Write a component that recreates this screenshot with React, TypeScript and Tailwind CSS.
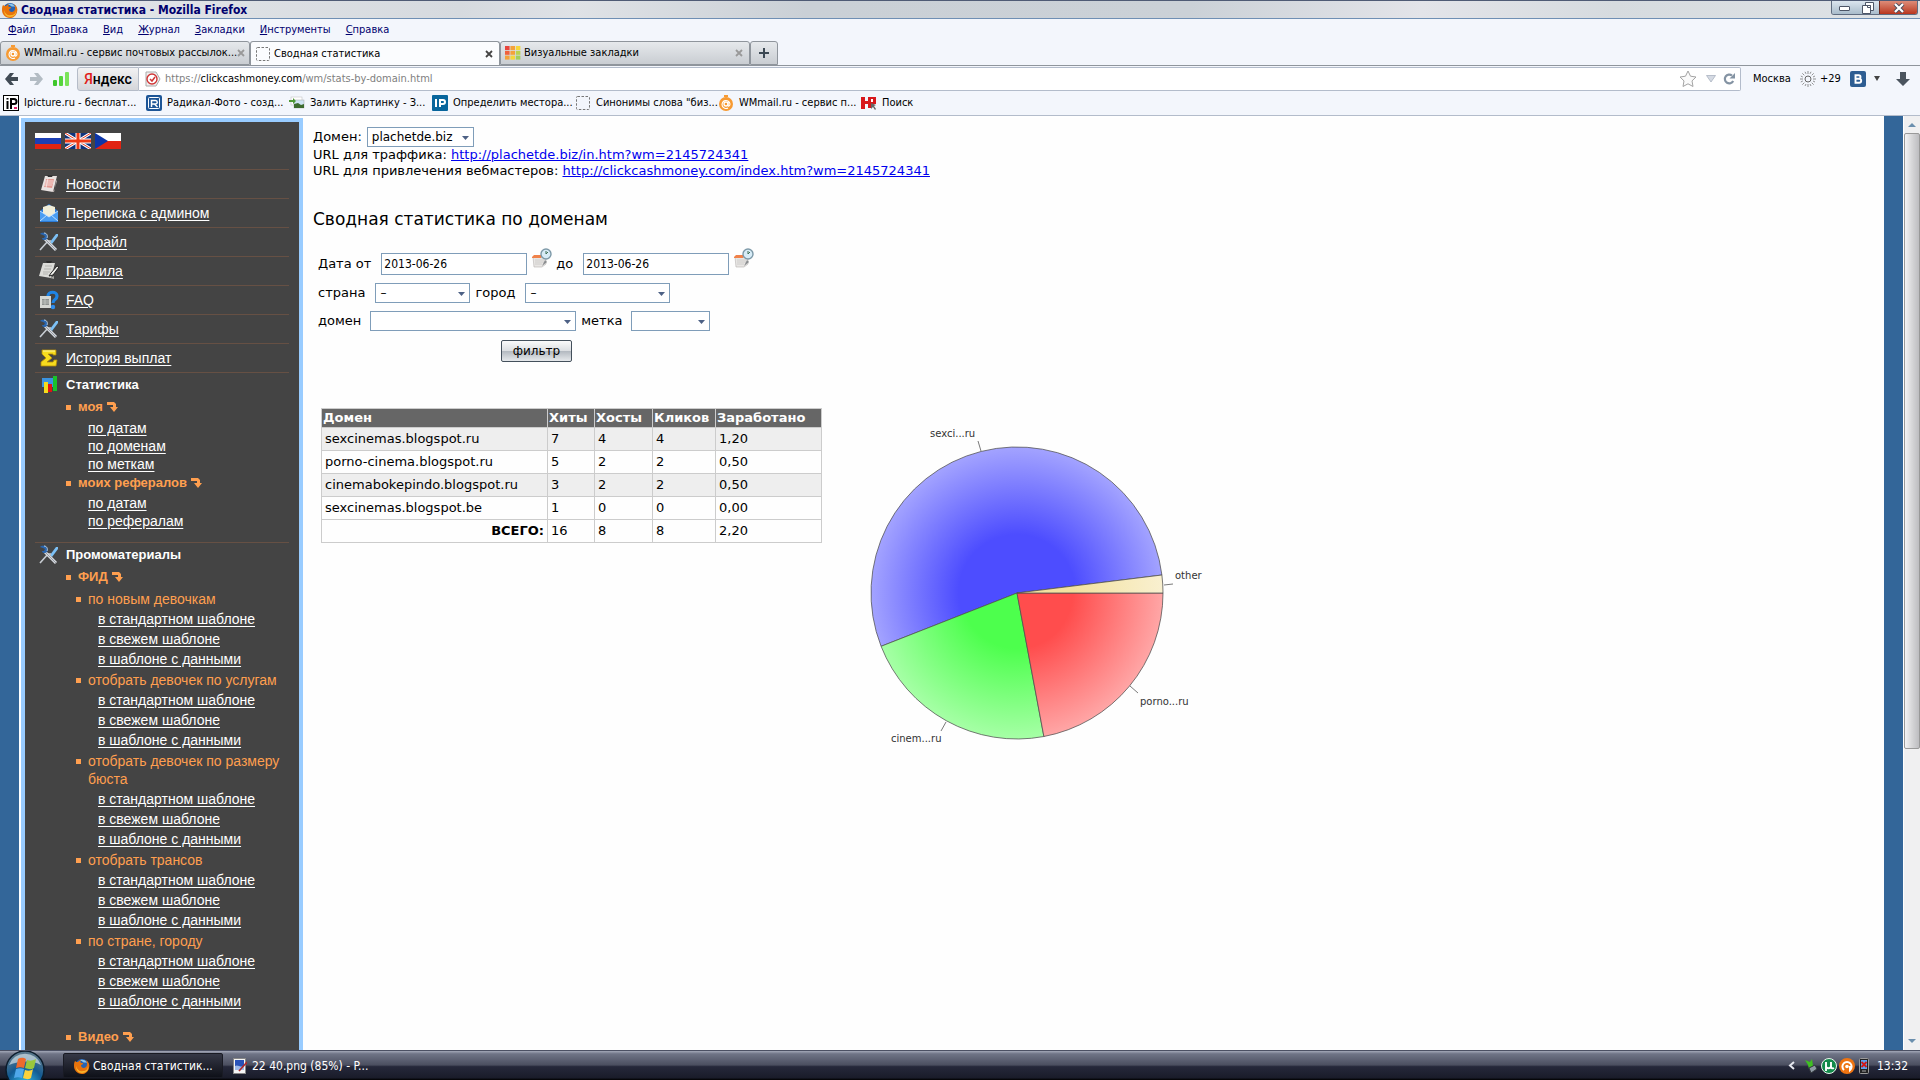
import type { ReactNode } from 'react';

const menuItems = ['Файл', 'Правка', 'Вид', 'Журнал', 'Закладки', 'Инструменты', 'Справка'];

const mainLinks: { label: string; icon: () => ReactNode }[] = [
  { label: 'Новости', icon: NewsIcon },
  { label: 'Переписка с админом', icon: MailIcon },
  { label: 'Профайл', icon: ToolsIcon },
  { label: 'Правила', icon: RulesIcon },
  { label: 'FAQ', icon: FaqIcon },
  { label: 'Тарифы', icon: ToolsIcon },
  { label: 'История выплат', icon: SumIcon },
];

const feedGroups = [
  'по новым девочкам',
  'отобрать девочек по услугам',
  'отобрать девочек по размеру бюста',
  'отобрать трансов',
  'по стране, городу',
];
const feedTemplates = ['в стандартном шаблоне', 'в свежем шаблоне', 'в шаблоне с данными'];

const columns = [
  { title: 'Домен', width: 'w-[226px]' },
  { title: 'Хиты', width: 'w-[47px]' },
  { title: 'Хосты', width: 'w-[58px]' },
  { title: 'Кликов', width: 'w-[63px]' },
  { title: 'Заработано', width: 'w-[106px]' },
];
const rows = [
  ['sexcinemas.blogspot.ru', '7', '4', '4', '1,20'],
  ['porno-cinema.blogspot.ru', '5', '2', '2', '0,50'],
  ['cinemabokepindo.blogspot.ru', '3', '2', '2', '0,50'],
  ['sexcinemas.blogspot.be', '1', '0', '0', '0,00'],
];

/* ---------- icons ---------- */

function FirefoxIcon() {
  return (
    <svg viewBox="0 0 16 16" className="size-4 shrink-0">
      <circle cx="8" cy="8" r="7" fill="#2a63b0" />
      <path d="M6 2c3-1 6 0 7 3-2-1-3 0-4-1S7 4 6 2z" fill="#8cc7ee" />
      <path d="M1 3c1 1 2 1 3 1 1-1 2-2 3-2-1 1-1 2 0 3h2c0 1-1 2-2 2 0 3 3 4 5 2 2-2 1-5 0-7 3 2 4 5 3 8-1 4-4 6-7 6-5 0-8-4-8-8 0-2 0-3 1-5z" fill="#e8730c" />
      <path d="M2 8c1 4 4 6 7 5 3 0 5-2 5-5 1 4-2 7-6 7s-6-3-6-7z" fill="#f8b52c" />
    </svg>
  );
}

function WmMailIcon() {
  return (
    <svg viewBox="0 0 16 16" className="size-4 shrink-0">
      <circle cx="8" cy="9" r="7" fill="#f79a32" />
      <path d="M6 0h4v2H6z" fill="#f79a32" />
      <circle cx="8" cy="9" r="2" fill="none" stroke="#fff" strokeWidth="1.3" />
      <path d="M10 7v3c0 2 2 1 2-1a4 4 0 1 0-2 4" fill="none" stroke="#fff" strokeWidth="1.1" />
    </svg>
  );
}

function BlankIcon() {
  return (
    <svg viewBox="0 0 16 16" className="size-4 shrink-0">
      <rect x="1.5" y="1.5" width="13" height="13" rx="1" fill="none" stroke="#777" strokeDasharray="2.5 1.5" />
    </svg>
  );
}

function GridIcon() {
  const fills = ['#e8453c', '#f4a13a', '#f6d63a', '#f0603c', '#f4a13a', '#b9d34c', '#f4a13a', '#f6d63a', '#a4cf5a'];
  return (
    <svg viewBox="0 0 16 16" className="size-4 shrink-0">
      {fills.map((fill, i) => (
        <rect key={i} x={(i % 3) * 5.4} y={1 + Math.floor(i / 3) * 4.8} width="4.6" height="4" fill={fill} />
      ))}
    </svg>
  );
}

function IpictureIcon() {
  return (
    <svg viewBox="0 0 16 16" className="size-4 shrink-0">
      <rect x=".5" y=".5" width="15" height="15" fill="#fff" stroke="#000" />
      <path d="M4.500 3v1.500M4.500 6v8M8 14V4h3a2 2 0 0 1 0 5H8" fill="none" stroke="#000" strokeWidth="2" />
      <path d="M11 13h3" stroke="#e0246c" strokeWidth="2" />
    </svg>
  );
}

function RadikalIcon() {
  return (
    <svg viewBox="0 0 16 16" className="size-4 shrink-0">
      <rect width="16" height="16" rx="2" fill="#1d5596" />
      <rect x="2.500" y="2.500" width="11" height="11" rx="1" fill="none" stroke="#fff" />
      <path d="M5.500 12V5.500h4a1.500 1.500 0 0 1 0 3.500h-4m3 0 3 3" fill="none" stroke="#fff" strokeWidth="1.500" />
    </svg>
  );
}

function PhotoIcon() {
  return (
    <svg viewBox="0 0 16 16" className="size-4 shrink-0">
      <rect x="2" y="2" width="11" height="8" fill="#fff" stroke="#bbb" strokeWidth=".5" />
      <rect x="5" y="5" width="10" height="8" fill="#cfe4f3" stroke="#aaa" strokeWidth=".5" />
      <path d="M5 13V9l4-1 3 2 3-1v4z" fill="#3d6b2e" />
      <path d="M0 5h4V3l3 3-3 3V7H0z" fill="#4f9a36" />
    </svg>
  );
}

function IpIcon() {
  return (
    <svg viewBox="0 0 16 16" className="size-4 shrink-0">
      <rect width="16" height="16" rx="1" fill="#07659c" />
      <path d="M4 4v8M8 12V5h3a1.500 1.500 0 0 1 0 4H8" fill="none" stroke="#fff" strokeWidth="2" />
    </svg>
  );
}

function SearchSiteIcon() {
  return (
    <svg viewBox="0 0 16 16" className="size-4 shrink-0">
      <path d="M0 2h4v4h3V2h8v7h-4v4H7V9H4v5H0z" fill="#d8181c" />
      <path d="M10 4h2v3h-2z" fill="#fff" />
      <path d="m10 8 5 2-2 1 2 3-1 1-2-3-2 2z" fill="#666" />
    </svg>
  );
}

function NewsIcon() {
  return (
    <svg viewBox="0 0 20 20" className="size-5">
      <path d="M6 2 18 2 14 18 2 16z" fill="#e9e2e0" />
      <path d="M7 5l8 0-2 9-8-1z" fill="#e49a93" />
      <path d="M6 7h8M6 9h8M5 11h8M9 4 7 14" stroke="#f6e9e6" strokeWidth=".8" />
      <path d="M8 1h6l-1 2H9z" fill="#333" />
      <path d="m13 18 3-3 1-9 1 1-3 11z" fill="#b3aaa8" />
    </svg>
  );
}

function MailIcon() {
  return (
    <svg viewBox="0 0 20 20" className="size-5">
      <path d="M1 8 10 1l9 7v11H1z" fill="#2c7bd8" />
      <path d="M4 4 10 2l6 2v7l-6 4-6-4z" fill="#f1eed8" />
      <path d="m1 8 9 6 9-6v10H1z" fill="#4a9df2" />
      <path d="m1 18 7-6m11 6-7-6M1 8l9 6 9-6" fill="none" stroke="#c9e4ff" strokeWidth=".9" />
    </svg>
  );
}

function ToolsIcon() {
  return (
    <svg viewBox="0 0 20 20" className="size-5">
      <path d="m11 10 6-8 2 0 0 2-6 8z" fill="#7cc0f5" />
      <path d="m12 9-3 0-8 9" stroke="#c7ccd2" strokeWidth="1.600" fill="none" />
      <path d="m6 7 11 11" stroke="#d5d9de" strokeWidth="3" />
      <path d="m6 7 11 11" stroke="#858c95" strokeWidth=".8" />
      <path d="M1 2c1-1 4-2 6 0 1 1 2 4 1 5-2 2-5 1-5-1l2 0 1-2-2-1z" fill="#2a66b0" />
      <path d="M5 1c3 0 4 3 3 5" stroke="#b8d4ee" fill="none" />
    </svg>
  );
}

function RulesIcon() {
  return (
    <svg viewBox="0 0 20 20" className="size-5">
      <path d="M4 2h12l-4 15L0 15z" fill="#dcdcd8" />
      <path d="M6 5h7M5 8h7M4 11h7M4 13h5" stroke="#b4b4b0" strokeWidth="1.200" />
      <path d="M7 0h6l-1 2H8z" fill="#2d2d2d" />
      <path d="m18 5-6 7-2 3 4-1 6-8z" fill="#f1f1ee" stroke="#222" />
      <path d="m11 17 4 1 0-3z" fill="#a9a9a4" />
    </svg>
  );
}

function FaqIcon() {
  return (
    <svg viewBox="0 0 20 20" className="size-5">
      <path d="M1 6h11v12H1z" fill="#d5d7d3" />
      <path d="M3 9h7v6H3z" fill="#8e9290" />
      <path d="M3 11h7M3 13h7M6 9v6" stroke="#cfd1ce" strokeWidth=".7" />
      <path d="M9 6c0-5 9-5 9 0 0 4-4 3-4 7" fill="none" stroke="#1f85e6" strokeWidth="3.200" />
      <circle cx="14" cy="17" r="2.200" fill="#2f8ff0" />
    </svg>
  );
}

function SumIcon() {
  return (
    <svg viewBox="0 0 20 20" className="size-5">
      <path d="M3 2h14v5h-3V6H9l4 4-5 4h6l1-2h3l-1 6H2v-4l5-4-4-4z" fill="#f7dc1e" stroke="#b58d08" strokeWidth=".8" />
      <path d="M4 3h12" stroke="#fff6a0" />
    </svg>
  );
}

function ChartIcon() {
  return (
    <svg viewBox="0 0 20 20" className="size-5">
      <path d="M3 3h12v9H3z" fill="#3b93e0" />
      <rect x="14" y="1" width="4" height="15" fill="#18c32a" />
      <rect x="9" y="9" width="4" height="8" fill="#e01414" />
      <rect x="5" y="7" width="4" height="11" fill="#f4dc1c" />
    </svg>
  );
}

function DownTurnIcon() {
  return (
    <svg viewBox="0 0 11 10" className="h-[10px] w-[11px]" fill="#ff9f4f">
      <path d="M0 0h4v3H0z" />
      <path d="M4 0h3l2 2v3h2L7 10 3 5h3V3H4z" />
    </svg>
  );
}

function CalendarIcon() {
  return (
    <svg viewBox="0 0 20 20" className="size-5">
      <path d="M1 9h13v7l-4 3H2z" fill="#e8e6e4" stroke="#b5b2b0" strokeWidth=".6" />
      <path d="m0 9 2-2h9l-2 3H0z" fill="#f0824a" />
      <path d="M3 12h9M3 14h9M3 16h7" stroke="#c9c6c4" strokeWidth=".8" />
      <path d="m13 12-3 6 5-4z" fill="#8a8d90" />
      <circle cx="14" cy="6" r="5" fill="#d7ecf7" stroke="#7d99a8" strokeWidth="1.400" />
      <path d="M14 6V3m0 3 2-2" stroke="#3f6f55" />
    </svg>
  );
}

function Flags() {
  return (
    <div className="flex gap-1">
      <svg viewBox="0 0 26 16" className="h-4 w-[26px]">
        <path d="M0 0h26v6H0z" fill="#fff" />
        <path d="M0 5h26v6H0z" fill="#1c3fb4" />
        <path d="M0 11h26v5H0z" fill="#e02412" />
      </svg>
      <svg viewBox="0 0 26 16" className="h-4 w-[26px]">
        <path d="M0 0h26v16H0z" fill="#10347c" />
        <path d="m0 0 26 16M26 0 0 16" stroke="#fff" strokeWidth="3" />
        <path d="m0 0 26 16M26 0 0 16" stroke="#e8381c" />
        <path d="M13 0v16M0 8h26" stroke="#fff" strokeWidth="5" />
        <path d="M13 0v16M0 8h26" stroke="#f03a16" strokeWidth="3" />
      </svg>
      <svg viewBox="0 0 26 16" className="h-4 w-[26px]">
        <path d="M0 0h26v8H0z" fill="#fff" />
        <path d="M0 8h26v8H0z" fill="#e02412" />
        <path d="m0 0 13 8-13 8z" fill="#0c35a8" />
      </svg>
    </div>
  );
}

/* ---------- browser chrome ---------- */

function TitleBar() {
  return (
    <div className="flex h-[19px] items-start justify-between border-t border-b border-t-[#4f5b75] border-b-[#6f8fb4] bg-[linear-gradient(100deg,#e4e7ea,#d6dadf_24%,#dfe2e6_30%,#cad0d6_42%,#cbd1d7_62%,#e3e4e9_74%,#d6dbdf_84%,#dfe3e6)] pl-0.5">
      <div className="flex h-[17px] items-center gap-[3px]">
        <FirefoxIcon />
        <h1 className="text-[12px] leading-4 font-bold text-[#00006e]">Сводная статистика - Mozilla Firefox</h1>
      </div>
      <div className="mr-0.5 flex h-[14px] overflow-hidden rounded-b-[3px] border border-t-0 border-[#5f6c80]">
        <button aria-label="Свернуть" className="flex w-6 items-end justify-center bg-gradient-to-b from-[#dbe5ee] to-[#a9bccb] pb-[3px]">
          <span className="h-[5px] w-[11px] rounded-[1px] border border-[#4c5566] bg-white" />
        </button>
        <button aria-label="Развернуть" className="flex w-[23px] items-center justify-center bg-gradient-to-b from-[#dbe5ee] to-[#a9bccb]">
          <svg viewBox="0 0 12 12" className="size-3" fill="#fff" stroke="#4c5566">
            <path d="M3.500.5h8v8h-8z" />
            <path d="M.5 3.500h8v8h-8z" />
            <path d="M5.500 3.500h3v2h-3z" />
          </svg>
        </button>
        <button aria-label="Закрыть" className="flex w-[38px] items-center justify-center border-l border-[#6b2a20] bg-gradient-to-b from-[#dd8c78] to-[#b8341c]">
          <svg viewBox="0 0 12 10" className="h-[10px] w-3">
            <path d="m2 1 8 8m0-8L2 9" stroke="#4c4c5c" strokeWidth="4" />
            <path d="m2 1 8 8m0-8L2 9" stroke="#fff" strokeWidth="2.200" />
          </svg>
        </button>
      </div>
    </div>
  );
}

function Tab({ icon, title, active = false }: { icon: ReactNode; title: string; active?: boolean }) {
  return (
    <div
      className={
        active
          ? 'flex h-6 w-[250px] items-center rounded-t-[3px] border border-b-0 border-[#8f959c] bg-[#fbfcfe] pr-[6px] pl-1'
          : 'flex h-6 w-[250px] items-center rounded-t-[3px] border border-[#8f959c] bg-gradient-to-b from-[#e6e9ec] to-[#c9cdd2] pr-[6px] pl-1'
      }
    >
      {icon}
      <button role="tab" aria-selected={active} className="ml-[3px] flex-1 text-left whitespace-nowrap">
        {title}
      </button>
      <button aria-label="Закрыть вкладку" className={active ? 'text-[#444]' : 'text-[#999]'}>
        <svg viewBox="0 0 8 8" className="size-2" stroke="currentColor" strokeWidth="1.800">
          <path d="m1 1 6 6m0-6L1 7" />
        </svg>
      </button>
    </div>
  );
}

function AddressBar() {
  return (
    <div className="flex h-[25px] items-center">
      <button aria-label="Назад" className="ml-[5px]">
        <svg viewBox="0 0 14 12" className="h-3 w-[14px]" fill="#414b55">
          <path d="M5 0h4L6 4h7v4H6l3 4H5L0 6z" />
        </svg>
      </button>
      <button aria-label="Вперёд" className="ml-[10px]">
        <svg viewBox="0 0 14 12" className="h-3 w-[14px]" fill="#b3bcc4">
          <path d="M9 0H5l3 4H1v4h7l-3 4h4l5-6z" />
        </svg>
      </button>
      <svg viewBox="0 0 16 14" className="ml-[10px] h-[14px] w-4">
        <rect y="8" width="4" height="6" rx="1" fill="#3fc72c" />
        <rect x="6" y="4" width="4" height="10" rx="1" fill="#56d53c" />
        <rect x="12" width="4" height="14" rx="1" fill="#7be35a" />
      </svg>
      <button className="ml-2 h-6 w-[62px] rounded-l-[3px] border border-[#b5bcc8] bg-gradient-to-b from-[#f2f2f3] to-[#d4d6da] text-center font-['Roboto',sans-serif] text-[14px] leading-5 font-medium text-black">
        <span className="text-[#e01b1b]">Я</span>ндекс
      </button>
      <div className="flex h-6 min-w-0 flex-1 items-center rounded-r-[2px] border border-l-0 border-[#b3bccb] bg-white pr-[5px] pl-1.5">
        <svg viewBox="0 0 16 16" className="size-4">
          <path d="M1 1h10l4 7-4 7H1z" fill="#f0f0f0" stroke="#aaa" />
          <circle cx="7" cy="8" r="5" fill="#fff" stroke="#cf3434" strokeWidth="1.400" />
          <path d="M5 8l2 2 3-4" fill="none" stroke="#cf3434" strokeWidth="1.500" />
        </svg>
        <div className="ml-1 flex-1 text-[#808080]">
          https://<span className="text-black">clickcashmoney.com</span>/wm/stats-by-domain.html
        </div>
        <button aria-label="Добавить в закладки">
          <svg viewBox="0 0 18 17" className="h-[17px] w-[18px]" fill="#fafafa" stroke="#a3a3a3">
            <path d="m9 1 2.500 5.200 5.500.8-4 3.900 1 5.600-5-2.700-5 2.700 1-5.600-4-3.900 5.500-.8z" />
          </svg>
        </button>
        <svg viewBox="0 0 10 8" className="ml-[9px] h-2 w-[10px]" fill="#d5dae3" stroke="#aab3c0" strokeWidth=".8">
          <path d="M.5.5h9L5 7z" />
        </svg>
        <button aria-label="Обновить" className="ml-[7px]">
          <svg viewBox="0 0 12 12" className="size-3" fill="none" stroke="#8493a3" strokeWidth="2.200">
            <path d="M9 2.500A4.400 4.400 0 1 0 10.200 8" />
            <path d="M12 0v5.500H6.500z" fill="#8493a3" stroke="none" />
          </svg>
        </button>
      </div>
      <div className="flex w-[179px] items-center pl-3">
        <span>Москва</span>
        <svg viewBox="0 0 16 16" className="ml-[9px] size-4" fill="none" stroke="#666">
          <circle cx="8" cy="8" r="3" />
          <path d="M8 0v3M8 13v3M0 8h3M13 8h3M2.300 2.300l2 2M11.700 11.700l2 2M13.700 2.300l-2 2M4.300 11.700l-2 2M5 .8l1 2M10 13l1 2M11 .8l-1 2M6 13l-1 2M.8 5l2 1M13 10l2 1M.8 11l2-1M13 6l2-1" strokeWidth=".7" />
        </svg>
        <span className="ml-1">+29</span>
        <svg viewBox="0 0 16 16" className="ml-[9px] size-4">
          <rect width="16" height="16" rx="2" fill="#2d5d92" />
          <path d="M5.500 4.200h3.200a1.800 1.800 0 0 1 0 3.600H5.500h3.700a2 2 0 0 1 0 4H5.500z" fill="none" stroke="#fff" strokeWidth="1.900" />
        </svg>
        <svg viewBox="0 0 6 5" className="ml-2 h-[5px] w-1.5" fill="#444">
          <path d="M0 0h6L3 5z" />
        </svg>
        <svg viewBox="0 0 14 14" className="ml-4 size-[14px]" fill="#4a545e">
          <path d="M4 0h6v7h4l-7 7-7-7h4z" />
        </svg>
      </div>
    </div>
  );
}

const bookmarks = [
  { title: 'Ipicture.ru - бесплат...', icon: <IpictureIcon /> },
  { title: 'Радикал-Фото - созд...', icon: <RadikalIcon /> },
  { title: 'Залить Картинку - З...', icon: <PhotoIcon /> },
  { title: 'Определить местора...', icon: <IpIcon /> },
  { title: 'Синонимы слова "биз...', icon: <BlankIcon /> },
  { title: 'WMmail.ru - сервис п...', icon: <WmMailIcon /> },
  { title: 'Поиск', icon: <SearchSiteIcon /> },
];

function BrowserChrome() {
  return (
    <header className="bg-[#f3f6fc] text-[11px] leading-[14px] text-black">
      <TitleBar />
      <nav className="flex h-[22px] items-center gap-[15px] pl-2 text-[#00006e]">
        {menuItems.map((item) => (
          <button key={item}>
            <u>{item[0]}</u>
            {item.slice(1)}
          </button>
        ))}
      </nav>
      <div role="tablist" className="flex h-[25px] items-end border-b border-[#8f959c]">
        <Tab icon={<WmMailIcon />} title="WMmail.ru - сервис почтовых рассылок..." />
        <Tab icon={<BlankIcon />} title="Сводная статистика" active />
        <Tab icon={<GridIcon />} title="Визуальные закладки" />
        <button aria-label="Новая вкладка" className="flex h-6 w-7 items-center justify-center rounded-t-[3px] border border-[#8f959c] bg-gradient-to-b from-[#e6e9ec] to-[#c9cdd2]">
          <svg viewBox="0 0 10 10" className="size-[10px]" stroke="#3c4954" strokeWidth="2">
            <path d="M5 0v10M0 5h10" />
          </svg>
        </button>
      </div>
      <AddressBar />
      <nav className="flex h-[25px] items-center border-b border-[#b3bccb] pl-[3px]">
        {bookmarks.map(({ title, icon }) => (
          <a key={title} href="#" className="flex w-[143px] shrink-0 items-center gap-[5px] whitespace-nowrap">
            {icon}
            {title}
          </a>
        ))}
      </nav>
    </header>
  );
}

/* ---------- sidebar ---------- */

function SideLink({ children }: { children: ReactNode }) {
  return (
    <a href="#" className="text-white underline underline-offset-2">
      {children}
    </a>
  );
}

function SubHeading({ children }: { children: ReactNode }) {
  return (
    <div className="flex h-5 items-center pl-[31px] text-[13px] font-bold text-[#ff9f4f]">
      <span className="mr-[7px] size-[5px] bg-[#ff9f4f]" />
      <span className="mr-1">{children}</span>
      <DownTurnIcon />
    </div>
  );
}

function SectionHeading({ icon, children }: { icon: ReactNode; children: ReactNode }) {
  return (
    <div className="flex h-6 items-center gap-[7px] pl-1 text-[13px] font-bold text-white">
      {icon}
      <h2>{children}</h2>
    </div>
  );
}

function Sidebar() {
  return (
    <aside className="w-[282px] shrink-0 border-4 border-b-0 border-[#99ccff] bg-[#444] px-[10px] pt-[11px] font-['Liberation_Sans',Arial,sans-serif] text-[14px] leading-[18px]">
      <Flags />
      <ul className="mt-5">
        {mainLinks.map(({ label, icon: Icon }) => (
          <li key={label} className="flex h-[29px] items-center gap-[7px] border-t border-[#665044] pl-1">
            <Icon />
            <SideLink>{label}</SideLink>
          </li>
        ))}
      </ul>
      <section className="border-t border-[#665044] pb-3">
        <SectionHeading icon={<ChartIcon />}>Статистика</SectionHeading>
        <SubHeading>моя</SubHeading>
        <ul className="pt-0.5 pl-[53px]">
          {['по датам', 'по доменам', 'по меткам'].map((item) => (
            <li key={item}>
              <SideLink>{item}</SideLink>
            </li>
          ))}
        </ul>
        <SubHeading>моих рефералов</SubHeading>
        <ul className="pt-px pl-[53px]">
          {['по датам', 'по рефералам'].map((item) => (
            <li key={item}>
              <SideLink>{item}</SideLink>
            </li>
          ))}
        </ul>
      </section>
      <section className="border-t border-[#665044]">
        <SectionHeading icon={<ToolsIcon />}>Промоматериалы</SectionHeading>
        <SubHeading>ФИД</SubHeading>
        <ul className="pt-px">
          {feedGroups.map((group) => (
            <li key={group}>
              <div className="flex items-start pt-0.5 pb-px pl-[41px] text-[#ff9f4f]">
                <span className="mt-[7px] mr-[7px] size-[5px] shrink-0 bg-[#ff9f4f]" />
                <span>{group}</span>
              </div>
              <ul className="pl-[63px] leading-5">
                {feedTemplates.map((template) => (
                  <li key={template}>
                    <SideLink>{template}</SideLink>
                  </li>
                ))}
              </ul>
            </li>
          ))}
        </ul>
        <div className="pt-4">
          <SubHeading>Видео</SubHeading>
        </div>
      </section>
    </aside>
  );
}

/* ---------- content ---------- */

interface SelectProps {
  id: string;
  value: string;
  width: string;
}

function Select({ id, value, width }: SelectProps) {
  return (
    <div className={`relative ${width}`}>
      <select id={id} className="block h-5 w-full appearance-none border border-[#7f9db9] bg-white pl-1 text-[12px] leading-4 text-black">
        <option>{value}</option>
      </select>
      <svg viewBox="0 0 7 4" className="pointer-events-none absolute top-[9px] right-[5px] h-1 w-[7px]" fill="#4d6185">
        <path d="M0 0h7L3.500 4z" />
      </svg>
    </div>
  );
}

function DateField({ id }: { id: string }) {
  return (
    <>
      <input id={id} defaultValue="2013-06-26" className="h-[22px] w-[146px] border border-[#7f9db9] bg-white pl-0.5 font-['DejaVu_Sans_Condensed','Noto_Sans',sans-serif] text-[12px] text-black" />
      <button type="button" aria-label="Календарь" className="mr-1 mb-3 ml-[5px]">
        <CalendarIcon />
      </button>
    </>
  );
}

function Filters() {
  return (
    <form className="mt-5 flex flex-col items-start pl-[5px]">
      <div className="flex h-[30px] items-center">
        <label htmlFor="from" className="mr-[10px]">Дата от</label>
        <DateField id="from" />
        <label htmlFor="to" className="mr-[10px]">до</label>
        <DateField id="to" />
      </div>
      <div className="flex h-7 items-center">
        <label htmlFor="country" className="mr-[10px]">страна</label>
        <Select id="country" value="–" width="w-[95px]" />
        <label htmlFor="city" className="mr-[10px] ml-[5px]">город</label>
        <Select id="city" value="–" width="w-[145px]" />
      </div>
      <div className="flex h-7 items-center">
        <label htmlFor="domain-filter" className="mr-[9px]">домен</label>
        <Select id="domain-filter" value="" width="w-[206px]" />
        <label htmlFor="mark" className="mr-[9px] ml-[5px]">метка</label>
        <Select id="mark" value="" width="w-[79px]" />
      </div>
      <button type="button" className="mt-[5px] ml-[183px] h-[22px] w-[71px] rounded-[2px] border border-[#44505c] bg-[linear-gradient(#fafafa,#dcdfe2_48%,#b4bac1_52%,#e6e9ec)] text-[12px] leading-4">
        фильтр
      </button>
    </form>
  );
}

function StatsTable() {
  return (
    <table className="w-[501px] table-fixed border-collapse border border-[#ccc] text-left">
      <thead className="bg-[#666] text-white">
        <tr className="h-[19px]">
          {columns.map(({ title, width }) => (
            <th key={title} scope="col" className={`border border-[#ccc] px-px ${width}`}>
              {title}
            </th>
          ))}
        </tr>
      </thead>
      <tbody>
        {rows.map((row) => (
          <tr key={row[0]} className="h-[23px] odd:bg-[#eee]">
            {row.map((cell, i) => (
              <td key={i} className="border border-[#ccc] px-[3px]">{cell}</td>
            ))}
          </tr>
        ))}
        <tr className="h-[23px]">
          <th scope="row" className="border border-[#ccc] px-[3px] text-right">ВСЕГО:</th>
          {['16', '8', '8', '2,20'].map((cell, i) => (
            <td key={i} className="border border-[#ccc] px-[3px]">{cell}</td>
          ))}
        </tr>
      </tbody>
    </table>
  );
}

function PieChart() {
  return (
    <svg viewBox="0 0 380 360" className="h-[360px] w-[380px]" role="img" aria-label="Хиты по доменам">
      <defs>
        <radialGradient id="blue" gradientUnits="userSpaceOnUse" cx="177" cy="192" r="146">
          <stop offset=".4" stopColor="#4d4dff" />
          <stop offset="1" stopColor="#a3a3ff" />
        </radialGradient>
        <radialGradient id="green" gradientUnits="userSpaceOnUse" cx="177" cy="192" r="146">
          <stop offset=".38" stopColor="#4dff4d" />
          <stop offset="1" stopColor="#a6ffa6" />
        </radialGradient>
        <radialGradient id="red" gradientUnits="userSpaceOnUse" cx="177" cy="192" r="146">
          <stop offset=".38" stopColor="#ff4d4d" />
          <stop offset="1" stopColor="#ffa6a6" />
        </radialGradient>
        <radialGradient id="sand" gradientUnits="userSpaceOnUse" cx="177" cy="192" r="146">
          <stop offset=".38" stopColor="#f3e2a0" />
          <stop offset="1" stopColor="#f9f0d0" />
        </radialGradient>
      </defs>
      <g stroke="#4d4d4d" strokeOpacity=".75">
        <path d="M177 192 41.100 245.300A146 146 0 1 1 321.900 174z" fill="url(#blue)" />
        <path d="M177 192 203.900 335.500A146 146 0 0 1 41.100 245.300z" fill="url(#green)" />
        <path d="M177 192H323A146 146 0 0 1 203.900 335.500z" fill="url(#red)" />
        <path d="M177 192 321.900 174A146 146 0 0 1 323 192z" fill="url(#sand)" />
        <path d="m138 40 3 10M324 184l9-1M290 285l8 7M106 321l-5 9" fill="none" />
      </g>
      <g className="text-[10px]" fill="#333">
        <text x="90" y="36">sexci...ru</text>
        <text x="335" y="178">other</text>
        <text x="300" y="304">porno...ru</text>
        <text x="51" y="341">cinem...ru</text>
      </g>
    </svg>
  );
}

function Content() {
  return (
    <main className="min-w-0 flex-1 bg-[#fefefe] pt-[9px] pl-[10px] font-['DejaVu_Sans',Verdana,sans-serif] text-[13px] leading-4 text-black">
      <div className="flex items-center gap-[5px]">
        <label htmlFor="domain">Домен:</label>
        <Select id="domain" value="plachetde.biz" width="w-[107px]" />
      </div>
      <p>
        URL для траффика: <a href="#" className="text-[#0000ee] underline">http://plachetde.biz/in.htm?wm=2145724341</a>
      </p>
      <p>
        URL для привлечения вебмастеров: <a href="#" className="text-[#0000ee] underline">http://clickcashmoney.com/index.htm?wm=2145724341</a>
      </p>
      <h2 className="mt-[30px] text-[17px] leading-5">Сводная статистика по доменам</h2>
      <Filters />
      <div className="flex items-start pl-2">
        <div className="pt-[46px]">
          <StatsTable />
        </div>
        <div className="ml-[18px] pt-[39px]">
          <PieChart />
        </div>
      </div>
    </main>
  );
}

function PageScrollbar() {
  return (
    <div className="flex w-[17px] shrink-0 flex-col items-center border-l border-white bg-[#f0f0f1]">
      <svg viewBox="0 0 8 4" className="mt-[7px] mb-[6px] h-1 w-2 shrink-0" fill="#6b8fae">
        <path d="M0 4h8L4 0z" />
      </svg>
      <div className="h-[66%] w-full rounded-[2px] border border-[#999] bg-gradient-to-r from-[#f4f4f5] via-[#d6d6d8] to-[#bdbdc0]" />
      <svg viewBox="0 0 8 4" className="mt-auto mb-[7px] h-1 w-2 shrink-0" fill="#6b8fae">
        <path d="M0 0h8L4 4z" />
      </svg>
    </div>
  );
}

/* ---------- taskbar ---------- */

function Taskbar() {
  return (
    <footer className="flex h-[30px] shrink-0 items-center border-t border-[#4b5063] bg-[linear-gradient(#a3a8b8,#6f7486_10%,#4b4f60_48%,#25283a_54%,#1a1c2a_92%,#000)] text-[12px] text-white">
      <button aria-label="Пуск" className="ml-[5px] h-[30px] w-10 overflow-hidden">
        <svg viewBox="0 0 40 30" className="h-[30px] w-10">
          <defs>
            <radialGradient id="orb" cx=".5" cy=".9" r=".8">
              <stop offset="0" stopColor="#35c3f0" />
              <stop offset=".6" stopColor="#125a92" />
              <stop offset="1" stopColor="#56768c" />
            </radialGradient>
          </defs>
          <circle cx="20" cy="19" r="19" fill="url(#orb)" stroke="#0b1c2c" strokeWidth="1.500" />
          <path d="M4 14a17 17 0 0 1 32 0c-10-5-22-4-32 0z" fill="#dbe8ee" opacity=".65" />
          <path d="M13 8c3-2 6-1 8 0l-2 9c-3-1-5-1-8 0z" fill="#ee6a2c" />
          <path d="M22 9c3 1 5 1 9-1l-2 9c-3 2-6 1-9 0z" fill="#9ac73c" />
          <path d="M11 18c3-1 5-1 8 0l-2 9c-3-1-5-1-8 0z" fill="#4fa8ea" />
          <path d="M20 19c3 1 6 1 8-1l-2 9c-3 2-5 1-8 0z" fill="#fbd23c" />
        </svg>
      </button>
      <button className="ml-[18px] flex h-[25px] w-40 items-center gap-[3px] rounded-[2px] border border-[#191b24] bg-gradient-to-b from-[#353846] to-[#0f1119] pl-[10px]">
        <FirefoxIcon />
        Сводная статистик...
      </button>
      <button className="ml-[10px] flex items-center gap-[5px]">
        <svg viewBox="0 0 14 16" className="h-4 w-[14px]">
          <rect x=".5" y=".5" width="12" height="15" fill="#f5f5f5" stroke="#888" />
          <path d="M2 2h9v8H2z" fill="#2852b8" />
          <path d="M2 8c3-2 5 2 9 0v4H2z" fill="#9cb8e8" />
          <path d="m14 4-8 9" stroke="#b02a2a" strokeWidth="1.600" />
        </svg>
        22 40.png (85%) - P...
      </button>
      <div className="mr-3 ml-auto flex items-center">
        <svg viewBox="0 0 7 9" className="mr-[9px] h-[9px] w-[7px]" fill="none" stroke="#e4e6ee" strokeWidth="2">
          <path d="M6 1 2 4.500 6 8" />
        </svg>
        <svg viewBox="0 0 14 16" className="mr-[3px] h-4 w-[14px]">
          <path d="M1 2 6 4l2-3 1 7-4 3-1-4z" fill="#3fc022" />
          <path d="m5 10 6-3 2 4-6 4z" fill="#8d98a3" stroke="#30353a" />
        </svg>
        <svg viewBox="0 0 16 16" className="mr-0.5 size-4">
          <circle cx="8" cy="8" r="7.500" fill="#128a4a" stroke="#eaf5ee" />
          <path d="M5 4v9M5 8c0 3 5 3 5 0V4M10 8c0 2 1 3 3 2" fill="none" stroke="#fff" strokeWidth="1.900" />
        </svg>
        <svg viewBox="0 0 16 16" className="mr-1 size-4">
          <circle cx="8" cy="8" r="8" fill="#ef7411" />
          <path d="M5 12A4.600 4.600 0 1 1 11 12V8" fill="none" stroke="#fff" strokeWidth="2" />
          <circle cx="8" cy="8.500" r="1.800" fill="#fff" />
        </svg>
        <svg viewBox="0 0 10 16" className="mr-2 h-4 w-[10px]">
          <rect x=".5" y=".5" width="9" height="15" rx="1" fill="#222" stroke="#9a9a9a" />
          <rect x="2" y="2" width="6" height="9" fill="#5aa0f0" />
          <path d="m2.500 4 5 5m0-5-5 5" stroke="#d01818" strokeWidth="1.800" />
          <path d="M3 13h4" stroke="#aaa" />
        </svg>
        <time>13:32</time>
      </div>
    </footer>
  );
}

export default function App() {
  return (
    <div className="flex h-screen flex-col overflow-hidden font-['DejaVu_Sans_Condensed','Noto_Sans',sans-serif]">
      <BrowserChrome />
      <div className="flex min-h-0 flex-1 overflow-hidden">
        <div className="flex min-w-0 flex-1 overflow-hidden bg-[#336699] pr-[19px] pl-[19px]">
          <div className="flex min-w-0 flex-1 bg-white pt-0.5 pl-0.5">
            <Sidebar />
            <Content />
          </div>
        </div>
        <PageScrollbar />
      </div>
      <Taskbar />
    </div>
  );
}
